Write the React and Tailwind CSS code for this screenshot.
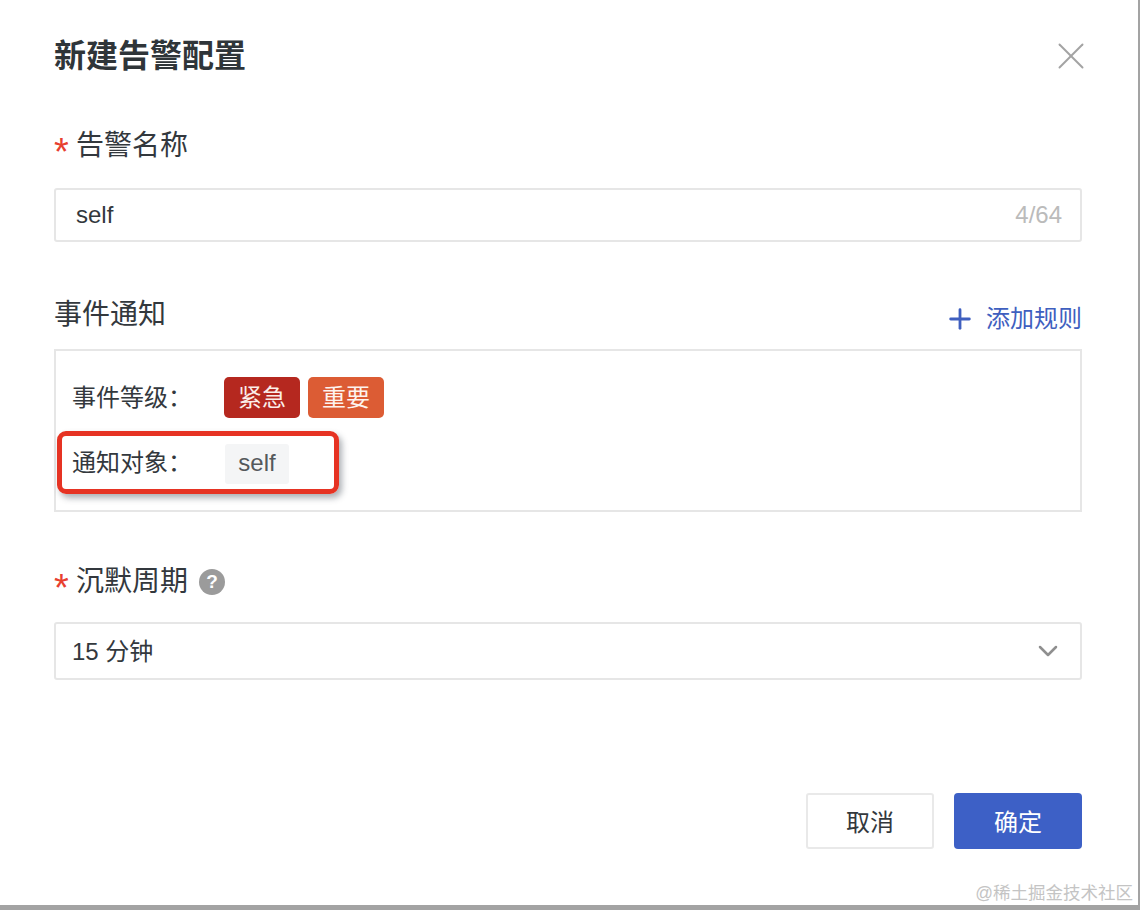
import React from "react";
import { X, Plus, ChevronDown } from "lucide-react";

const Star = () => <span className="w-[23px] h-[28px] text-[38px] leading-[41px] text-[#e8402f] -mr-[1px]">*</span>;

export default function App() {
  return (
    <div className="w-[1140px] h-[910px] bg-[#a3a3a3] overflow-hidden font-['Liberation_Sans','Noto_Sans_CJK_SC',sans-serif] text-[#33383d]">
      <div className="relative w-[1138px] h-[905px] bg-white px-[54px] flex flex-col">
        <div className="h-[112px] flex items-start justify-between pt-[36px]">
          <h1 className="text-[32px] leading-[40px] font-bold text-[#2f3539]">新建告警配置</h1>
          <X className="w-[46px] h-[46px] -mt-[3px] -mr-[10px] text-[#a3a3a3]" strokeWidth={1} />
        </div>

        <div className="flex items-center h-[40px] mt-[14px]">
          <Star />
          <span className="text-[28px] leading-[40px]">告警名称</span>
        </div>
        <div className="mt-[22px] w-[1028px] h-[54px] border-2 border-[#e6e6e6] rounded-[3px] flex items-center justify-between pl-[20px] pr-[18px] text-[24px]">
          <span>self</span>
          <span className="text-[#bbbbbb]">4/64</span>
        </div>

        <div className="mt-[53px] w-[1028px] h-[40px] flex items-center justify-between">
          <span className="text-[28px] leading-[40px]">事件通知</span>
          <span className="flex items-center text-[24px] text-[#3f5fbf] translate-y-[4px]">
            <Plus className="w-[32px] h-[32px] mr-[10px]" strokeWidth={2.1} />
            添加规则
          </span>
        </div>
        <div className="relative mt-[14px] w-[1028px] h-[163px] border-2 border-[#e6e6e6] pl-[16px] pt-[26px] text-[24px]">
          <div className="flex items-center h-[41px]">
            <span className="w-[152px]">事件等级：</span>
            <span className="w-[76px] h-[41px] rounded-[5px] bg-[#b5281f] text-[#fbeee9] flex items-center justify-center">紧急</span>
            <span className="ml-[8px] w-[76px] h-[41px] rounded-[5px] bg-[#dc5c34] text-[#fdf3ee] flex items-center justify-center">重要</span>
          </div>
          <div className="flex items-center h-[40px] mt-[26px]">
            <span className="w-[153px] pb-[2px]">通知对象：</span>
            <span className="w-[64px] h-[40px] rounded-[3px] bg-[#f4f5f6] text-[#55595c] flex items-center justify-center pb-[2px]">self</span>
          </div>
          <div className="absolute left-[1px] top-[80px] w-[282px] h-[63px] border-[5px] border-[#e63323] rounded-[9px] shadow-[3px_4px_6px_rgba(70,80,90,0.45)]" />
        </div>

        <div className="mt-[50px] flex items-center h-[40px]">
          <Star />
          <span className="text-[28px] leading-[40px]">沉默周期</span>
          <span className="ml-[11px] w-[26px] h-[26px] rounded-full bg-[#9b9b9b] text-white text-[19px] font-bold flex items-center justify-center">?</span>
        </div>
        <div className="mt-[20px] w-[1028px] h-[58px] border-2 border-[#e6e6e6] rounded-[3px] flex items-center justify-between pl-[16px] pr-[16px] text-[24px]">
          <span className="pt-[1px]">15 分钟</span>
          <ChevronDown className="w-[32px] h-[32px] text-[#8f8f8f]" strokeWidth={1.9} />
        </div>

        <div className="mt-[113px] w-[1028px] flex justify-end gap-[20px] text-[24px]">
          <button className="w-[128px] h-[56px] border-2 border-[#e9e9e9] rounded-[3px] bg-white flex items-center justify-center pt-[4px]">取消</button>
          <button className="w-[128px] h-[56px] rounded-[4px] bg-[#3d60c6] text-white flex items-center justify-center pt-[4px]">确定</button>
        </div>

        <span className="absolute right-[5px] top-[881px] text-[17.5px] leading-[24px] text-[#c4c4c4]">@稀土掘金技术社区</span>
      </div>
    </div>
  );
}
